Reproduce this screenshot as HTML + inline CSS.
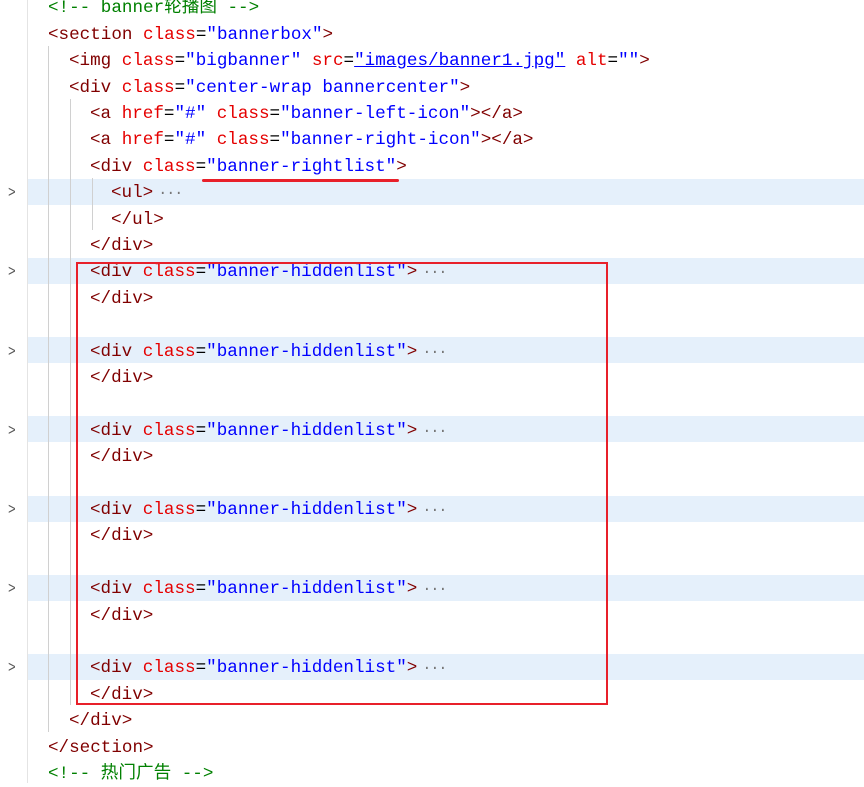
<!DOCTYPE html>
<html><head><meta charset="utf-8"><style>
body{margin:0;width:864px;height:783px;overflow:hidden;background:#fff;position:relative;font-family:"Liberation Mono","Noto Sans CJK SC",monospace;font-size:17.6px}
.l{position:absolute;height:26.4px;line-height:26.4px;white-space:pre}
.hl{background:#e5f0fb;left:28px;width:836px;position:absolute;height:26px}
.t{color:#800000}.a{color:#e50000}.v{color:#0000ff}.c{color:#008000}.e{color:#777;font-size:15px;margin-left:5px;letter-spacing:-1px}
.g{position:absolute;width:1px;background:#d0d0d0}
.ch{position:absolute;left:7px;color:#555;font-size:16px;line-height:26.4px;height:26.4px;transform:scaleX(0.8)}
#w{position:absolute;left:0;top:2.5px;width:864px;height:783px}
</style></head><body>
<div style="position:absolute;left:27px;top:0;width:1px;height:783px;background:#e4e4e4"></div>
<div class="hl" style="top:179px"></div>
<div class="hl" style="top:258px"></div>
<div class="hl" style="top:337px"></div>
<div class="hl" style="top:416px"></div>
<div class="hl" style="top:496px"></div>
<div class="hl" style="top:575px"></div>
<div class="hl" style="top:654px"></div>
<div class="g" style="left:48px;top:46px;height:686px"></div>
<div class="g" style="left:70px;top:99px;height:606px"></div>
<div class="g" style="left:92px;top:178px;height:52px"></div>
<div id="w">
<div class="l" style="top:-7.2px;left:48px"><span class="c">&lt;!-- banner轮播图 --&gt;</span></div>
<div class="l" style="top:19.2px;left:48px"><span class="t">&lt;section</span> <span class="a">class</span>=<span class="v">"bannerbox"</span><span class="t">&gt;</span></div>
<div class="l" style="top:45.6px;left:69px"><span class="t">&lt;img</span> <span class="a">class</span>=<span class="v">"bigbanner"</span> <span class="a">src</span>=<span class="v" style="text-decoration:underline">"images/banner1.jpg"</span> <span class="a">alt</span>=<span class="v">""</span><span class="t">&gt;</span></div>
<div class="l" style="top:72px;left:69px"><span class="t">&lt;div</span> <span class="a">class</span>=<span class="v">"center-wrap bannercenter"</span><span class="t">&gt;</span></div>
<div class="l" style="top:98.4px;left:90px"><span class="t">&lt;a</span> <span class="a">href</span>=<span class="v">"#"</span> <span class="a">class</span>=<span class="v">"banner-left-icon"</span><span class="t">&gt;&lt;/a&gt;</span></div>
<div class="l" style="top:124.8px;left:90px"><span class="t">&lt;a</span> <span class="a">href</span>=<span class="v">"#"</span> <span class="a">class</span>=<span class="v">"banner-right-icon"</span><span class="t">&gt;&lt;/a&gt;</span></div>
<div class="l" style="top:151.2px;left:90px"><span class="t">&lt;div</span> <span class="a">class</span>=<span class="v">"banner-rightlist"</span><span class="t">&gt;</span></div>
<div class="ch" style="top:177.6px">&gt;</div>
<div class="l" style="top:177.6px;left:111px"><span class="t">&lt;ul&gt;</span><span class="e">···</span></div>
<div class="l" style="top:204px;left:111px"><span class="t">&lt;/ul&gt;</span></div>
<div class="l" style="top:230.4px;left:90px"><span class="t">&lt;/div&gt;</span></div>

<div class="ch" style="top:256.8px">&gt;</div>
<div class="l" style="top:256.8px;left:90px"><span class="t">&lt;div</span> <span class="a">class</span>=<span class="v">"banner-hiddenlist"</span><span class="t">&gt;</span><span class="e">···</span></div>
<div class="l" style="top:283.2px;left:90px"><span class="t">&lt;/div&gt;</span></div>

<div class="ch" style="top:336px">&gt;</div>
<div class="l" style="top:336px;left:90px"><span class="t">&lt;div</span> <span class="a">class</span>=<span class="v">"banner-hiddenlist"</span><span class="t">&gt;</span><span class="e">···</span></div>
<div class="l" style="top:362.4px;left:90px"><span class="t">&lt;/div&gt;</span></div>

<div class="ch" style="top:415.2px">&gt;</div>
<div class="l" style="top:415.2px;left:90px"><span class="t">&lt;div</span> <span class="a">class</span>=<span class="v">"banner-hiddenlist"</span><span class="t">&gt;</span><span class="e">···</span></div>
<div class="l" style="top:441.6px;left:90px"><span class="t">&lt;/div&gt;</span></div>

<div class="ch" style="top:494.4px">&gt;</div>
<div class="l" style="top:494.4px;left:90px"><span class="t">&lt;div</span> <span class="a">class</span>=<span class="v">"banner-hiddenlist"</span><span class="t">&gt;</span><span class="e">···</span></div>
<div class="l" style="top:520.8px;left:90px"><span class="t">&lt;/div&gt;</span></div>

<div class="ch" style="top:573.6px">&gt;</div>
<div class="l" style="top:573.6px;left:90px"><span class="t">&lt;div</span> <span class="a">class</span>=<span class="v">"banner-hiddenlist"</span><span class="t">&gt;</span><span class="e">···</span></div>
<div class="l" style="top:600px;left:90px"><span class="t">&lt;/div&gt;</span></div>

<div class="ch" style="top:652.8px">&gt;</div>
<div class="l" style="top:652.8px;left:90px"><span class="t">&lt;div</span> <span class="a">class</span>=<span class="v">"banner-hiddenlist"</span><span class="t">&gt;</span><span class="e">···</span></div>
<div class="l" style="top:679.2px;left:90px"><span class="t">&lt;/div&gt;</span></div>

<div class="l" style="top:705.6px;left:69px"><span class="t">&lt;/div&gt;</span></div>
<div class="l" style="top:732px;left:48px"><span class="t">&lt;/section&gt;</span></div>
<div class="l" style="top:758.4px;left:48px"><span class="c">&lt;!-- 热门广告 --&gt;</span></div>
</div>
<div style="position:absolute;left:202px;top:179px;width:197px;height:3px;background:#e8202a;border-radius:2px"></div>
<div style="position:absolute;left:76px;top:262px;width:528px;height:439px;border:2px solid #e8202a"></div>
</body></html>
